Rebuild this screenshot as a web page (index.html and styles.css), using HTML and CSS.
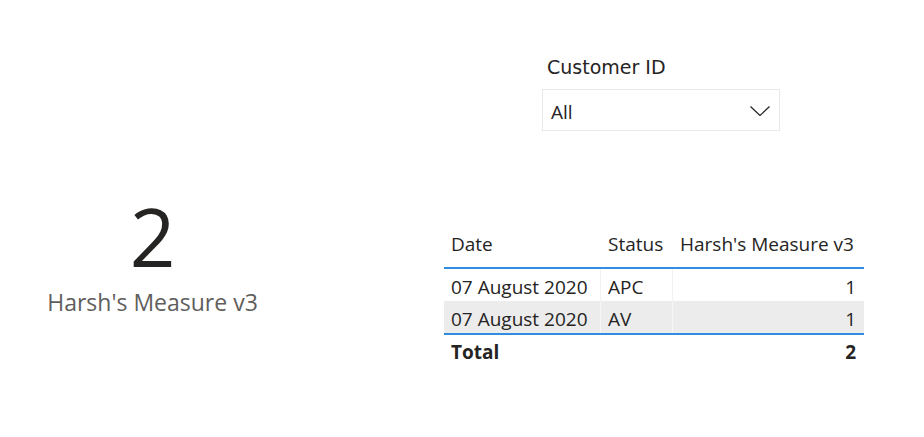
FILE: index.html
```html
<!DOCTYPE html>
<html>
<head>
<meta charset="utf-8">
<link rel="stylesheet" href="styles.css">
</head>
<body>
<div class="page">
  <div class="card">
    <div class="card-value">2</div>
    <div class="card-label">Harsh's Measure v3</div>
  </div>
  <div class="right">
    <div class="slicer">
      <div class="slicer-title">Customer ID</div>
      <div class="slicer-box">
        <span class="slicer-value">All</span>
        <svg class="chev" width="20" height="10" viewBox="0 0 20 10"><path d="M0.5 0.5 L10 9.5 L19.5 0.5" fill="none" stroke="#252423" stroke-width="1.2"/></svg>
      </div>
    </div>
    <div class="table">
      <div class="row head">
        <div class="c c1">Date</div>
        <div class="c c2">Status</div>
        <div class="c c3">Harsh's Measure v3</div>
      </div>
      <div class="row body">
        <div class="c c1">07 August 2020</div>
        <div class="c c2">APC</div>
        <div class="c c3 num">1</div>
      </div>
      <div class="row body alt">
        <div class="c c1">07 August 2020</div>
        <div class="c c2">AV</div>
        <div class="c c3 num">1</div>
      </div>
      <div class="row total">
        <div class="c c1">Total</div>
        <div class="c c2"></div>
        <div class="c c3 num">2</div>
      </div>
    </div>
  </div>
</div>
</body>
</html>
```
FILE: styles.css
```css
html, body {
  margin: 0;
  padding: 0;
  background: #ffffff;
}
body {
  font-family: "Open Sans", "Noto Sans", sans-serif;
  color: #252423;
}
.page {
  display: flex;
  width: 924px;
  height: 437px;
}
.card {
  width: 305px;
  display: flex;
  flex-direction: column;
  align-items: center;
  padding-top: 196px;
}
.card-value {
  font-size: 80px;
  line-height: 80px;
  color: #252423;
}
.card-label {
  font-size: 23px;
  line-height: 30px;
  color: #605e5c;
  margin-top: 11px;
}
.right {
  margin-left: 139px;
  display: flex;
  flex-direction: column;
}
.slicer {
  margin-left: 98px;
  padding-top: 55px;
}
.slicer-title {
  font-family: "DejaVu Sans", sans-serif;
  font-size: 19px;
  line-height: 24px;
  color: #252423;
  padding-left: 5px;
}
.slicer-box {
  margin-top: 10px;
  height: 40px;
  border: 1px solid #e8e8e8;
  display: flex;
  align-items: center;
  justify-content: space-between;
  padding: 0 9px 0 8px;
  width: 219px;
}
.slicer-value {
  font-size: 19px;
  line-height: 24px;
  padding-top: 4px;
}
.chev {
  margin-top: 2px;
}
.table {
  margin-top: 92px;
  width: 420px;
  font-size: 19px;
}
.row {
  display: flex;
}
.c {
  box-sizing: border-box;
  padding: 0 7px;
  white-space: nowrap;
}
.c1 { width: 156px; }
.c2 { width: 72px; border-left: 1px solid transparent; }
.c3 { width: 192px; border-left: 1px solid transparent; }
.num { text-align: right; padding-right: 8px; }
.head {
  height: 46px;
  align-items: flex-end;
  border-bottom: 2px solid #2f8ee0;
  box-sizing: border-box;
}
.head .c { line-height: 26px; padding-bottom: 10px; }
.head .c3 { padding-left: 7px; padding-right: 0; }
.body {
  height: 32px;
}
.body .c2, .body .c3 { border-left-color: #f1f1f1; }
.body .c { height: 32px; line-height: 30px; padding-top: 3px; }
.alt {
  background: #ececec;
  border-bottom: 2px solid #2f8ee0;
}
.alt .c2, .alt .c3 { border-left-color: #f6f6f6; }
.total {
  height: 34px;
  font-weight: 700;
}
.total .c { line-height: 32px; padding-top: 1px; }
```
